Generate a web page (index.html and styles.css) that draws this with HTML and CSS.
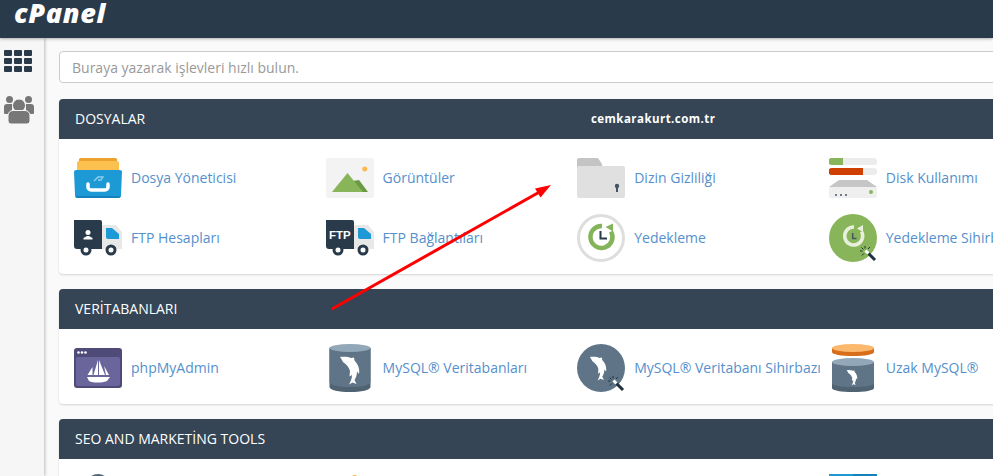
FILE: index.html
```html
<!DOCTYPE html>
<html lang="tr">
<head>
  <meta charset="UTF-8" />
  <title>cPanel</title>
  <link rel="stylesheet" href="styles.css">
</head>
<body>

  <svg class="defs" width="0" height="0">
    <defs>
      <path id="dolphin" d="M14 13C18 12.500 22 12.500 25 14L28 13.500L28.500 16.500C32 20 34 25 33 30L31 27.500C31 31 30 34 28.500 36L30.500 40L26.500 38.500L23 40.500C25 37 26 34 26 31L23.500 32.500L24 27C23 23 20 20 17 18C16 16 15 14.500 14 13Z" fill="#fff"/>
      <g id="wand">
        <path d="M39 39L46 46" stroke="#20303f" stroke-width="3"/>
        <path d="M36 32V34.500M31 37H33.500M32.500 33.500L34.500 35.500M33 41.500L34.800 39.500M41 33L39 35" stroke="#20303f" stroke-width="1"/>
        <path d="M36.500 36.500L39.500 39.500" stroke="#fff" stroke-width="3"/>
      </g>
      <g id="truck">
        <path d="M28 11H42L48 18V35H28Z" fill="#e8e8e8"/>
        <path d="M32 14H38L45 20V25H34A2 2 0 0 1 32 23Z" fill="#1d9ad6"/>
        <path d="M2 6H26A2 2 0 0 1 28 8V35H3A3 3 0 0 1 0 32V6Z" fill="#293a4b"/>
        <circle cx="12" cy="36" r="4" fill="#fff" stroke="#293a4b" stroke-width="3"/>
        <circle cx="37" cy="36" r="4" fill="#fff" stroke="#293a4b" stroke-width="3"/>
      </g>
    </defs>
  </svg>

  <header class="topbar">
    <span class="logo">cPanel</span>
  </header>

  <div class="layout">
    <nav class="sidebar">
      <a class="side-link">
        <svg width="28" height="22" viewBox="0 0 28 22">
          <g fill="#293a4b">
            <rect width="8" height="6" rx="1"/><rect x="10" width="8" height="6" rx="1"/><rect x="20" width="8" height="6" rx="1"/>
            <rect y="8" width="8" height="6" rx="1"/><rect x="10" y="8" width="8" height="6" rx="1"/><rect x="20" y="8" width="8" height="6" rx="1"/>
            <rect y="16" width="8" height="6" rx="1"/><rect x="10" y="16" width="8" height="6" rx="1"/><rect x="20" y="16" width="8" height="6" rx="1"/>
          </g>
        </svg>
      </a>
      <a class="side-link">
        <svg width="30" height="28" viewBox="0 0 30 28">
          <g fill="#777">
            <circle cx="5.500" cy="3.500" r="3.500"/><circle cx="24.500" cy="3.500" r="3.500"/>
            <path d="M0 11A3 3 0 0 1 3 8H8L8 18H1A1 1 0 0 1 0 17Z"/><path d="M30 11A3 3 0 0 0 27 8H22L22 18H29A1 1 0 0 0 30 17Z"/>
            <circle cx="15" cy="9.500" r="6.500" stroke="#f6f6f6" stroke-width="1"/>
            <path d="M4 25V20A5 5 0 0 1 9 14.500H21A5 5 0 0 1 26 20V25A3 3 0 0 1 23 28H7A3 3 0 0 1 4 25Z" stroke="#f6f6f6" stroke-width="1"/>
          </g>
        </svg>
      </a>
    </nav>

    <main class="content">
      <input class="search" type="text" placeholder="Buraya yazarak işlevleri hızlı bulun." />

      <section class="panel">
        <h2 class="panel-title">DOSYALAR</h2>
        <div class="panel-body">
          <a class="tool">
            <svg class="icon" viewBox="0 0 48 48">
              <path d="M5 5.500A1.500 1.500 0 0 1 6.500 4H41.500A1.500 1.500 0 0 1 43 5.500V12H5Z" fill="#eda12e"/>
              <path d="M3 9A2 2 0 0 1 5 7H43A2 2 0 0 1 45 9V20H3Z" fill="#fcc04e"/>
              <path d="M2 16H46A2 2 0 0 1 48 18L47 41A3 3 0 0 1 44 44H4A3 3 0 0 1 1 41L0 18A2 2 0 0 1 2 16Z" fill="#1d9ad6"/>
              <path d="M1 42H47V41.500A3 3 0 0 1 44 44H4A3 3 0 0 1 1 41.500Z" fill="#1583bb"/>
              <path d="M14 30V33A3 3 0 0 0 17 36H31A3 3 0 0 0 34 33V30" fill="none" stroke="#fff" stroke-width="3.500" stroke-linecap="round"/>
              <path d="M20 27L24 23H29L27 26H24" fill="none" stroke="#8fd0ee" stroke-width="1.300"/>
            </svg>
            <span>Dosya Yöneticisi</span>
          </a>
          <a class="tool">
            <svg class="icon" viewBox="0 0 48 48">
              <rect y="4" width="48" height="40" rx="2" fill="#f3f3f3"/>
              <path d="M27 27L33 26L42 38H34Z" fill="#6c9a44"/>
              <path d="M6 38L21.500 19L37 38Z" fill="#88b55a"/>
              <circle cx="38.700" cy="15" r="2.500" fill="#fcb94e"/>
            </svg>
            <span>Görüntüler</span>
          </a>
          <a class="tool">
            <svg class="icon" viewBox="0 0 48 48">
              <path d="M2 4H21L25 10V14H0V6A2 2 0 0 1 2 4Z" fill="#c4c4c4"/>
              <rect y="12" width="48" height="32" rx="2" fill="#e0e0e0"/>
              <circle cx="40" cy="32" r="2.200" fill="#445463"/>
              <rect x="39" y="33" width="2" height="5" fill="#445463"/>
            </svg>
            <span>Dizin Gizliliği</span>
          </a>
          <a class="tool">
            <svg class="icon" viewBox="0 0 48 48">
              <rect y="4" width="48" height="7" rx="3" fill="#ececec"/>
              <path d="M3 4H14V11H3A3 3 0 0 1 3 4Z" fill="#88b55a"/>
              <rect y="14" width="48" height="7" rx="3" fill="#ececec"/>
              <path d="M3 14H34V21H3A3 3 0 0 1 3 14Z" fill="#cf4000"/>
              <path d="M10 26H38L48 33H0Z" fill="#c6c6c6"/>
              <path d="M0 33H48V42A2 2 0 0 1 46 44H2A2 2 0 0 1 0 42Z" fill="#efefef"/>
              <circle cx="42" cy="38" r="2" fill="#88b55a"/>
              <g fill="#445463"><circle cx="7" cy="41" r="1"/><circle cx="12" cy="41" r="1"/><circle cx="17" cy="41" r="1"/></g>
            </svg>
            <span>Disk Kullanımı</span>
          </a>
          <a class="tool">
            <svg class="icon" viewBox="0 0 48 48">
              <use href="#truck"/>
              <circle cx="14" cy="18.500" r="2.500" fill="#fff"/>
              <path d="M9.500 25.500V24L13 22H15L18.500 24V25.500Z" fill="#fff"/>
            </svg>
            <span>FTP Hesapları</span>
          </a>
          <a class="tool">
            <svg class="icon" viewBox="0 0 48 48">
              <use href="#truck"/>
              <text class="truck-text" x="3" y="25">FTP</text>
            </svg>
            <span>FTP Bağlantıları</span>
          </a>
          <a class="tool">
            <svg class="icon" viewBox="0 0 48 48">
              <circle cx="24" cy="24" r="22.500" fill="#fff" stroke="#dedede" stroke-width="3"/>
              <path d="M25 12A11 11 0 1 0 34 17.500" fill="none" stroke="#84b45a" stroke-width="4.500"/>
              <path d="M28.500 13L36 9.500V17.500Z" fill="#84b45a"/>
              <path d="M23.500 17V24.500H30" fill="none" stroke="#293a4b" stroke-width="2"/>
            </svg>
            <span>Yedekleme</span>
          </a>
          <a class="tool">
            <svg class="icon" viewBox="0 0 48 48">
              <circle cx="24" cy="24" r="24" fill="#88b55a"/>
              <path d="M25 13A9 9 0 1 0 32.500 17.500" fill="none" stroke="#e8f0dd" stroke-width="3.500"/>
              <path d="M28 14.500L34 11V18Z" fill="#e8f0dd"/>
              <path d="M23.700 19V24.500H27.500" fill="none" stroke="#445463" stroke-width="1.500"/>
              <use href="#wand"/>
            </svg>
            <span>Yedekleme Sihirbazı</span>
          </a>
        </div>
      </section>

      <section class="panel">
        <h2 class="panel-title">VERİTABANLARI</h2>
        <div class="panel-body">
          <a class="tool">
            <svg class="icon" viewBox="0 0 48 48">
              <rect y="4" width="48" height="40" rx="3" fill="#4f4a78"/>
              <rect x="2" y="13" width="44" height="29" rx="2" fill="#6a659b"/>
              <g fill="#fff">
                <circle cx="4.500" cy="8.500" r="1.300"/><circle cx="8" cy="8.500" r="1.300"/><circle cx="11.500" cy="8.500" r="1.300"/>
                <path d="M24 16V31H19.500Z"/><path d="M25 16L31 31H25Z"/><path d="M18.500 23V31H13.500Z"/><path d="M30 22L35 31H32Z"/>
                <path d="M13 33H36L33 37C28 39 19 39 15 37Z"/>
              </g>
            </svg>
            <span>phpMyAdmin</span>
          </a>
          <a class="tool">
            <svg class="icon" viewBox="0 0 48 48">
              <path d="M3.500 4V43C3.500 46 13 48 24 48S44.500 46 44.500 43V4Z" fill="#4f6373"/>
              <path d="M3.500 4V38C3.500 41 13 43 24 43S44.500 41 44.500 38V4Z" fill="#5f7587"/>
              <ellipse cx="24" cy="4" rx="20.500" ry="4" fill="#92a8b8"/>
              <use href="#dolphin"/>
            </svg>
            <span>MySQL® Veritabanları</span>
          </a>
          <a class="tool">
            <svg class="icon" viewBox="0 0 48 48">
              <circle cx="24" cy="24" r="24" fill="#5f7587"/>
              <use href="#dolphin" transform="translate(1 2) scale(.85)"/>
              <use href="#wand"/>
            </svg>
            <span>MySQL® Veritabanı Sihirbazı</span>
          </a>
          <a class="tool">
            <svg class="icon" viewBox="0 0 48 48">
              <path d="M3 4V8C3 10.500 12 12 24 12S45 10.500 45 8V4Z" fill="#d86d1a"/>
              <ellipse cx="24" cy="4" rx="21" ry="4" fill="#fcb96e"/>
              <path d="M3 18V44C3 46.500 12 48 24 48S45 46.500 45 44V18Z" fill="#4f6373"/>
              <path d="M3 18V39C3 41.500 12 43 24 43S45 41.500 45 39V18Z" fill="#5f7587"/>
              <ellipse cx="24" cy="18" rx="21" ry="4" fill="#92a8b8"/>
              <use href="#dolphin" transform="translate(10 19) scale(.55)"/>
            </svg>
            <span>Uzak MySQL®</span>
          </a>
        </div>
      </section>

      <section class="panel">
        <h2 class="panel-title">SEO AND MARKETİNG TOOLS</h2>
        <div class="panel-body">
          <a class="tool">
            <svg class="icon" viewBox="0 0 48 48"><circle cx="24" cy="12" r="12" fill="#4f6373"/></svg>
          </a>
          <a class="tool">
            <svg class="icon" viewBox="0 0 48 48"><circle cx="28.500" cy="4" r="3" fill="#fcb94e"/></svg>
          </a>
          <a class="tool"></a>
          <a class="tool">
            <svg class="icon" viewBox="0 0 48 48">
              <rect width="24" height="48" fill="#1d9ad6"/><rect x="24" width="24" height="48" fill="#1583bb"/>
            </svg>
          </a>
        </div>
      </section>
    </main>
  </div>

  <!-- ekran görüntüsünün üstüne eklenen işaretler -->
  <span class="watermark">cemkarakurt.com.tr</span>
  <svg class="arrow" width="993" height="476" viewBox="0 0 993 476">
    <path d="M332 309L543 190" stroke="#f00" stroke-width="3" fill="none"/>
    <path d="M551 185L535 188.500L540.500 197.500Z" fill="#f00"/>
  </svg>

</body>
</html>
```

FILE: styles.css
```css
html,
body {
  height: 476px;
  overflow: hidden;
}

body {
  margin: 0;
  font-family: "Open Sans", sans-serif;
  font-size: 14px;
  background: #fafafa;
}

.defs {
  display: block;
}

.topbar {
  height: 38px;
  background: #293a4b;
  box-shadow: 0 1px 3px rgba(0, 0, 0, .3);
  display: flex;
  position: relative;
  z-index: 2;
}

.logo {
  margin-left: 14px;
  font-size: 27px;
  line-height: 26px;
  height: 26px;
  font-weight: 800;
  font-style: italic;
  letter-spacing: .65px;
  color: #fff;
}

.layout {
  display: flex;
}

.sidebar {
  width: 44px;
  height: 438px;
  flex: none;
  background: #f6f6f6;
  box-shadow: 1px 0 3px rgba(0, 0, 0, .25);
  display: flex;
  flex-direction: column;
  align-items: flex-start;
  padding: 12px 0 0 4px;
  box-sizing: border-box;
  gap: 24px;
}

.side-link {
  display: block;
  line-height: 0;
}

.content {
  width: 1100px;
  flex: none;
  padding: 13px 0 0 15px;
}

.search {
  display: block;
  width: 100%;
  height: 32px;
  box-sizing: border-box;
  padding: 0 12px;
  border: 1px solid #ccc;
  border-radius: 4px;
  background: #fff;
  font-family: inherit;
  font-size: 14px;
  margin-bottom: 16px;
}

.search::placeholder {
  color: #999;
  opacity: 1;
}

.panel {
  margin-bottom: 15px;
  background: #fff;
  border-radius: 4px;
  box-shadow: 0 1px 2px rgba(0, 0, 0, .15);
}

.panel-title {
  margin: 0;
  height: 40px;
  padding: 0 16px;
  background: #354555;
  border-radius: 4px 4px 0 0;
  color: #fff;
  font-size: 14px;
  font-weight: 400;
  line-height: 40px;
}

.panel-body {
  display: grid;
  grid-template-columns: repeat(4, 251.6px);
  row-gap: 12px;
  padding: 15px 15px 12px;
}

.tool {
  display: flex;
  align-items: center;
  gap: 9px;
  height: 48px;
  color: #5590cc;
  white-space: nowrap;
}

.tool span {
  padding-bottom: 2px;
}

.icon {
  width: 48px;
  height: 48px;
  flex: none;
}

.truck-text {
  font-family: "Liberation Sans", sans-serif;
  font-size: 11.500px;
  font-weight: bold;
  fill: #fff;
}

.watermark {
  position: absolute;
  left: 591px;
  top: 110px;
  color: #fff;
  font-size: 11.500px;
  font-weight: 700;
  letter-spacing: .45px;
  line-height: 18px;
}

.arrow {
  position: absolute;
  left: 0;
  top: 0;
  pointer-events: none;
}
```
